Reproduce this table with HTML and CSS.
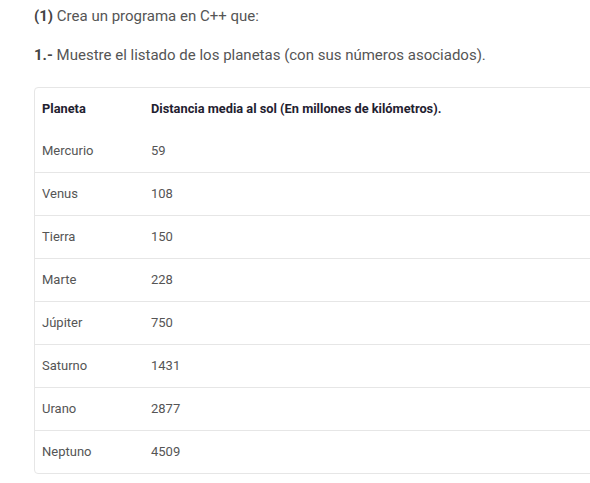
FILE: index.html
```html
<!DOCTYPE html>
<html lang="es">
<head>
<meta charset="utf-8">
<link rel="stylesheet" href="styles.css">
</head>
<body>
<div class="content">
  <p class="p1"><strong>(1)</strong> Crea un programa en C++ que:</p>
  <p class="p2"><strong>1.-</strong> Muestre el listado de los planetas (con sus números asociados).</p>
  <div class="table-wrap">
    <table class="planets">
      <thead>
        <tr><th class="c1">Planeta</th><th>Distancia media al sol (En millones de kilómetros).</th></tr>
      </thead>
      <tbody>
        <tr class="first"><td class="c1">Mercurio</td><td>59</td></tr>
        <tr><td class="c1">Venus</td><td>108</td></tr>
        <tr><td class="c1">Tierra</td><td>150</td></tr>
        <tr><td class="c1">Marte</td><td>228</td></tr>
        <tr><td class="c1">Júpiter</td><td>750</td></tr>
        <tr><td class="c1">Saturno</td><td>1431</td></tr>
        <tr><td class="c1">Urano</td><td>2877</td></tr>
        <tr><td class="c1">Neptuno</td><td>4509</td></tr>
      </tbody>
    </table>
  </div>
</div>
</body>
</html>
```
FILE: styles.css
```css
html, body {
  margin: 0;
  padding: 0;
  background: #fff;
  overflow: hidden;
}
body {
  font-family: Roboto, "Liberation Sans", sans-serif;
  color: #555;
}
.content {
  padding: 0 0 0 34px;
  width: 640px;
}
.p1 {
  margin: 0;
  padding-top: 6px;
  font-size: 15px;
  line-height: 20px;
}
.p2 {
  margin: 19px 0 0 0;
  font-size: 15px;
  line-height: 20px;
}
strong {
  color: #444;
  font-weight: 700;
}
.table-wrap {
  margin-top: 22px;
  border: 1px solid #e6e6e6;
  border-radius: 4px;
  width: 600px;
}
.planets {
  border-collapse: collapse;
  width: 100%;
  font-size: 13px;
}
.planets th, .planets td {
  height: 41px;
  padding: 0 7px 1px 7px;
  text-align: left;
  vertical-align: middle;
}
.planets th {
  color: #1f2130;
  font-weight: 700;
  font-size: 12.8px;
}
.planets td {
  color: #555;
  border-top: 1px solid #e6e6e6;
}
.planets tr.first td {
  border-top: none;
}
.planets .c1 {
  width: 95px;
}
```
